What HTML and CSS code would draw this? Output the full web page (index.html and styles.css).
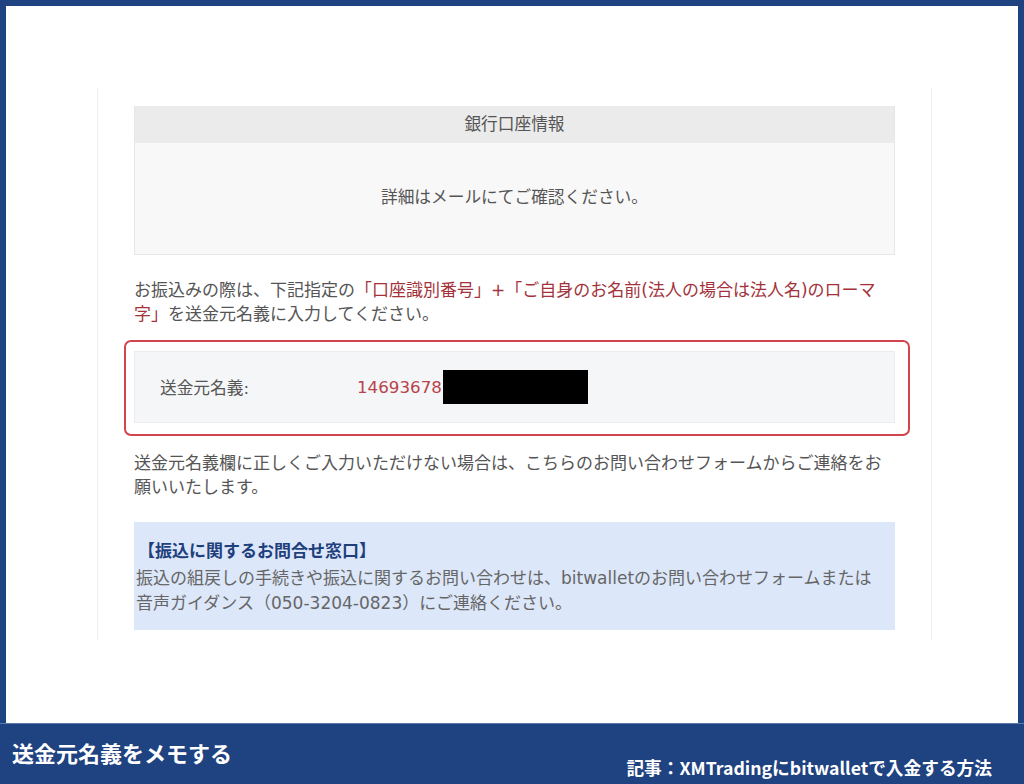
FILE: index.html
```html
<!DOCTYPE html>
<html lang="ja">
<head>
<meta charset="utf-8">
<title>送金元名義をメモする</title>
<link rel="stylesheet" href="styles.css">
</head>
<body>
<div class="frame">
  <div class="panel">
    <div class="bank">
      <div class="bank-head">銀行口座情報</div>
      <div class="bank-body">詳細はメールにてご確認ください。</div>
    </div>
    <p class="note">お振込みの際は、下記指定の<span class="em">「口座識別番号」+「ご自身のお名前(法人の場合は法人名)のローマ<br>字」</span>を送金元名義に入力してください。</p>
    <div class="highlight">
      <div class="sender">
        <span class="sender-label">送金元名義:</span>
        <span class="sender-value">14693678</span><span class="redact"></span>
      </div>
    </div>
    <p class="note note2">送金元名義欄に正しくご入力いただけない場合は、こちらのお問い合わせフォームからご連絡をお願いいたします。</p>
    <div class="contact">
      <div class="contact-title">【振込に関するお問合せ窓口】</div>
      <div class="contact-text">振込の組戻しの手続きや振込に関するお問い合わせは、bitwalletのお問い合わせフォームまたは音声ガイダンス（050-3204-0823）にご連絡ください。</div>
    </div>
  </div>
</div>
<div class="footer">
  <div class="footer-title">送金元名義をメモする</div>
  <div class="footer-link">記事：XMTradingにbitwalletで入金する方法</div>
</div>
</body>
</html>
```
FILE: styles.css
```css
html, body {
  margin: 0;
  padding: 0;
}
body {
  background: #1f4280;
  width: 1024px;
  height: 784px;
  overflow: hidden;
  font-family: "DejaVu Sans", "Noto Sans CJK JP", sans-serif;
  color: #555;
}
.frame {
  margin: 6px 6px 0;
  height: 717px;
  background: #fff;
  box-sizing: border-box;
  padding: 82px 0 0 91px;
}
.panel {
  width: 835px;
  box-sizing: border-box;
  border-left: 1px solid #eeeeee;
  border-right: 1px solid #eeeeee;
  padding: 18px 36px 10px 36px;
}
.bank {
  border: 1px solid #e6e6e6;
  border-top: none;
}
.bank-head {
  height: 37px;
  line-height: 37px;
  background: #ebebeb;
  text-align: center;
  font-size: 16.7px;
  color: #555;
}
.bank-body {
  height: 111px;
  line-height: 108px;
  background: #f8f8f8;
  text-align: center;
  font-size: 16.7px;
  color: #555;
}
.note {
  margin: 23px 0 0;
  font-size: 17px;
  line-height: 24px;
  color: #555;
}
.note .em {
  color: #a3323a;
}
.highlight {
  margin: 14px -15px 0 -10px;
  border: 2px solid #d4444f;
  border-radius: 7px;
  padding: 9px 13px 11px 8px;
}
.sender {
  height: 72px;
  box-sizing: border-box;
  background: #f5f6f7;
  border: 1px solid #ececec;
  display: flex;
  align-items: center;
  padding-left: 25px;
  font-size: 16.7px;
}
.sender-label {
  width: 197px;
  color: #555;
}
.sender-value {
  color: #b8434c;
}
.redact {
  display: inline-block;
  width: 145px;
  height: 34px;
  background: #000;
  margin-left: 1px;
}
.note2 {
  margin-top: 15px;
}
.contact {
  margin-top: 23px;
  background: #dce7f9;
  padding: 16px 12px 14px 2px;
  font-size: 17px;
}
.contact-title {
  line-height: 24px;
  font-family: "Noto Sans CJK JP", sans-serif;
  font-weight: 700;
  color: #1f3f7d;
  margin-bottom: 4px;
  padding-left: 2px;
}
.contact-text {
  line-height: 25px;
  color: #666;
}
.footer {
  height: 61px;
  box-sizing: border-box;
  border-top: 1px solid #5a7bb0;
  display: flex;
  justify-content: space-between;
  padding: 0 32px 0 12px;
  font-family: "Noto Sans CJK JP", sans-serif;
  font-weight: 700;
  color: #fff;
}
.footer-title {
  font-size: 22px;
  line-height: 30px;
  margin-top: 13px;
}
.footer-link {
  align-self: flex-end;
  font-size: 17.7px;
  line-height: 24px;
  margin-bottom: 5px;
}
```
